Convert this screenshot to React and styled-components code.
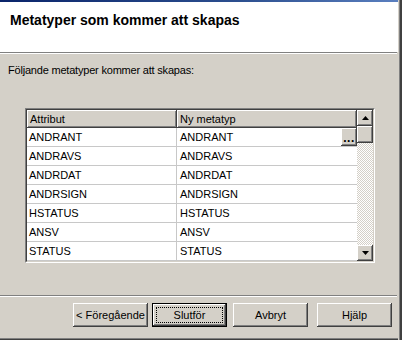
import React from 'react'
import styled, { createGlobalStyle } from 'styled-components'

const GlobalStyle = createGlobalStyle`
  html, body {
    margin: 0;
    padding: 0;
    background: #d4d0c8;
  }
  * {
    box-sizing: border-box;
  }
`

const bevel = `
  box-shadow: inset -1px -1px #404040, inset 1px 1px #ffffff, inset -2px -2px #808080, inset 2px 2px #d4d0c8;
`

const Window = styled.div`
  display: flex;
  width: 402px;
  height: 340px;
  font-family: "Liberation Sans", Arial, sans-serif;
  color: #000;
  overflow: hidden;
`

const Main = styled.div`
  display: flex;
  flex-direction: column;
  width: 398px;
  height: 100%;
  background: #d4d0c8;
`

const Edge = styled.div`
  width: 4px;
  height: 100%;
  border-left: 1px solid #d4d0c8;
  border-right: 2px solid #404040;
  background: #808080;
`

const TitleStripe = styled.div`
  height: 2px;
  background: linear-gradient(90deg, #0a246a, #2c4f8f 60%, #5a7fbf);
`

const Header = styled.div`
  height: 50px;
  padding: 10px 10px 0;
  background: #ffffff;
`

const Title = styled.h1`
  margin: 0;
  font-size: 14px;
  line-height: 16px;
  font-weight: bold;
`

const Rule = styled.div`
  height: 2px;
  flex: none;
  border-top: 1px solid #808080;
  border-bottom: 1px solid #ffffff;
  margin-right: 1px;
`

const Body = styled.div`
  flex: 1;
  display: flex;
  flex-direction: column;
  padding: 10px 0 0 8px;
`

const Intro = styled.p`
  margin: 0;
  font-size: 11px;
  line-height: 13px;
  letter-spacing: -0.2px;
`

const ListFrame = styled.div`
  display: flex;
  width: 350px;
  margin: 31px 0 0 17px;
  border-top: 1px solid #808080;
  border-left: 1px solid #808080;
  border-bottom: 1px solid #ffffff;
  border-right: 1px solid #ffffff;
`

const ListInner = styled.div`
  display: flex;
  border-top: 1px solid #404040;
  border-left: 1px solid #404040;
  border-bottom: 1px solid #d4d0c8;
  border-right: 1px solid #d4d0c8;
`

const Grid = styled.div`
  display: grid;
  grid-template-columns: 150px 180px;
  grid-auto-rows: 19px;
  grid-template-rows: 18px;
  background: #ffffff;
`

const HeadCell = styled.div`
  display: flex;
  align-items: center;
  padding: 0 0 1px 3px;
  font-size: 11px;
  background: #d4d0c8;
  ${bevel}
`

const Cell = styled.div`
  display: flex;
  align-items: center;
  padding-left: ${p => (p.$first ? '2px' : '3px')};
  font-size: 11px;
  border-bottom: 1px solid #c8c8c8;
  border-right: ${p => (p.$first ? '1px solid #c8c8c8' : 'none')};
`

const DotsButton = styled.div`
  align-self: flex-start;
  display: flex;
  align-items: flex-end;
  justify-content: center;
  width: 16px;
  height: 18px;
  margin-left: auto;
  padding-bottom: 4px;
  font-size: 12px;
  font-weight: bold;
  line-height: 8px;
  letter-spacing: 0.5px;
  background: #d4d0c8;
  ${bevel}
`

const ScrollBar = styled.div`
  display: flex;
  flex-direction: column;
  width: 16px;
`

const ScrollButton = styled.div`
  display: flex;
  align-items: center;
  justify-content: center;
  height: ${p => p.$h || 16}px;
  background: #d4d0c8;
  ${bevel}
`

const Track = styled.div`
  flex: 1;
  background: repeating-conic-gradient(#ffffff 0 25%, #d4d0c8 0 50%) 0 0 / 2px 2px;
`

const Footer = styled.div`
  display: flex;
  justify-content: flex-end;
  height: 41px;
  padding: 6px 6px 0 0;
`

const Button = styled.div`
  display: flex;
  align-items: center;
  justify-content: center;
  width: 75px;
  height: 24px;
  margin-left: ${p => p.$ml || 0}px;
  font-size: 11px;
  background: #d4d0c8;
  border: ${p => (p.$default ? '1px solid #000' : 'none')};
  ${bevel}
  outline: ${p => (p.$default ? '1px dotted #000' : 'none')};
  outline-offset: -5px;
`

const BottomEdge = styled.div`
  height: 2px;
  border-top: 1px solid #808080;
  background: #404040;
`

const Arrow = ({ down }) => (
  <svg width="7" height="4" viewBox="0 0 7 4">
    <polygon points={down ? '0,0 7,0 3.5,4' : '0,4 7,4 3.5,0'} fill="#000" />
  </svg>
)

const rows = ['ANDRANT', 'ANDRAVS', 'ANDRDAT', 'ANDRSIGN', 'HSTATUS', 'ANSV', 'STATUS']

const App = () => (
  <>
    <GlobalStyle />
    <Window>
      <Main>
        <TitleStripe />
        <Header>
          <Title>Metatyper som kommer att skapas</Title>
        </Header>
        <Rule />
        <Body>
          <Intro>Följande metatyper kommer att skapas:</Intro>
          <ListFrame>
            <ListInner>
              <Grid>
                <HeadCell>Attribut</HeadCell>
                <HeadCell>Ny metatyp</HeadCell>
                {rows.map((name, i) => (
                  <React.Fragment key={name}>
                    <Cell $first>{name}</Cell>
                    <Cell>
                      {name}
                      {i === 0 && <DotsButton>...</DotsButton>}
                    </Cell>
                  </React.Fragment>
                ))}
              </Grid>
              <ScrollBar>
                <ScrollButton><Arrow /></ScrollButton>
                <ScrollButton $h={17} />
                <Track />
                <ScrollButton><Arrow down /></ScrollButton>
              </ScrollBar>
            </ListInner>
          </ListFrame>
        </Body>
        <Rule />
        <Footer>
          <Button>&lt; Föregående</Button>
          <Button $default $ml={4}>Slutför</Button>
          <Button $ml={6}>Avbryt</Button>
          <Button $ml={9}>Hjälp</Button>
        </Footer>
        <BottomEdge />
      </Main>
      <Edge />
    </Window>
  </>
)

export default App
